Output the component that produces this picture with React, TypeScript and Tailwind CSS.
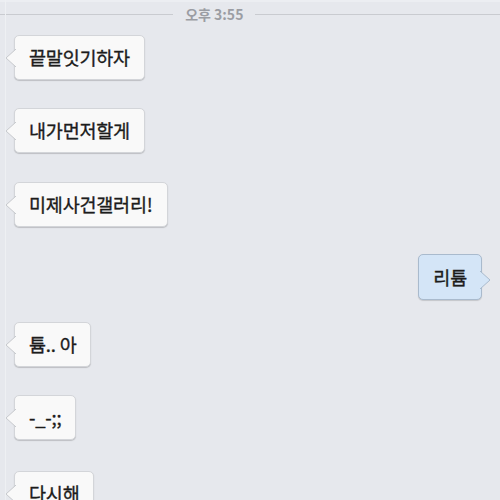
type Msg = { text: string; mine?: boolean; top: string };

const MESSAGES: Msg[] = [
  { text: "끝말잇기하자", top: "mt-[14px]" },
  { text: "내가먼저할게", top: "mt-[28px]" },
  { text: "미제사건갤러리!", top: "mt-[29px]" },
  { text: "리튬", mine: true, top: "mt-[27px]" },
  { text: "튬.. 아", top: "mt-[22px]" },
  { text: "-_-;;", top: "mt-[28px]" },
  { text: "다시해", top: "mt-[31px]" },
];

function Tail({ mine }: { mine?: boolean }) {
  if (mine) {
    return (
      <svg width="11" height="18" viewBox="0 0 11 18" className="absolute top-[16px] -right-[10px]">
        <path d="M0 0 L10 9 L0 18 Z" fill="#d4e5f7" />
        <path d="M0 0 L10 9 L0 18" fill="none" stroke="#a9bacd" strokeWidth="1" />
      </svg>
    );
  }
  return (
    <svg width="11" height="18" viewBox="0 0 11 18" className="absolute top-[13px] -left-[10px]">
      <path d="M11 0 L1 9 L11 18 Z" fill="#f9f9f9" />
      <path d="M11 0 L1 9 L11 18" fill="none" stroke="#c6c8cc" strokeWidth="1" />
    </svg>
  );
}

function Bubble({ msg }: { msg: Msg }) {
  return (
    <div className={`flex ${msg.mine ? "justify-end pr-[18px]" : "justify-start pl-[14px]"} ${msg.top}`}>
      <div
        className={
          msg.mine
            ? "relative flex h-[46px] items-center rounded-[5px] border border-[#a9bacd] bg-[#d4e5f7] px-[14px] shadow-[0_1px_1px_rgba(0,0,0,0.15)]"
            : "relative flex h-[45px] items-center rounded-[5px] border border-[#d3d5d9] bg-[#f9f9f9] px-[14px] shadow-[0_1px_1px_rgba(0,0,0,0.18)]"
        }
      >
        <Tail mine={msg.mine} />
        <span className="text-[18.5px] leading-none text-[#1c1c1c] tracking-[-0.2px] [-webkit-text-stroke:0.35px_#1c1c1c]">
          {msg.text}
        </span>
      </div>
    </div>
  );
}

export default function App() {
  return (
    <div
      className="relative h-[500px] w-[500px] overflow-hidden bg-[#e6e8ed]"
      style={{ fontFamily: '"Noto Sans CJK KR", "Noto Sans", sans-serif' }}
    >
      <div className="absolute top-0 bottom-0 left-[5px] w-px bg-[#eef0f3]" />
      <div className="h-[2px] bg-[#eceef2]" />
      <div className="flex items-center gap-3 pt-[5px]">
        <div className="h-px flex-[172] bg-[#c9cbd0]" />
        <span className="text-[14px] leading-none font-semibold text-[#9b9da3]">오후 3:55</span>
        <div className="h-px flex-[243] bg-[#c9cbd0]" />
      </div>
      {MESSAGES.map((m, i) => (
        <Bubble key={i} msg={m} />
      ))}
    </div>
  );
}
